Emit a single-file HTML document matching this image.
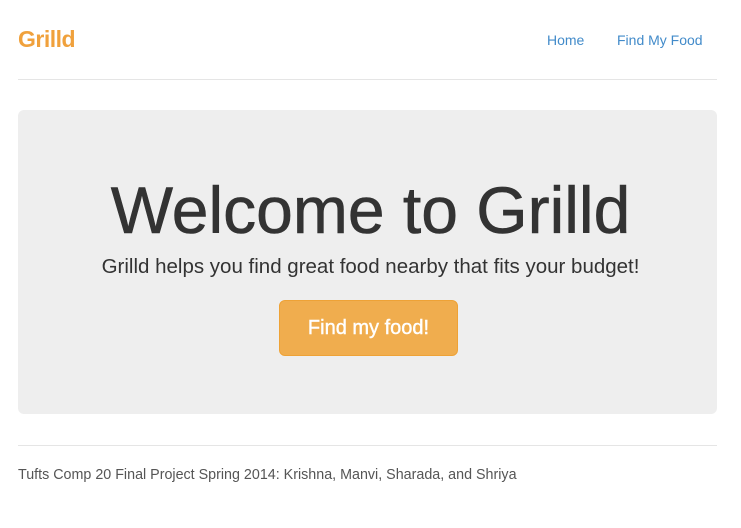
<!DOCTYPE html>
<html><head><style>
body{margin:0;background:#fff;font-family:"Liberation Sans",Arial,sans-serif;color:#333;width:741px;height:528px;overflow:hidden;position:relative}
.logo{position:absolute;left:18px;top:26px;font-size:23px;font-weight:bold;color:#f0a13c;letter-spacing:-0.5px}
.nav{position:absolute;top:32px;font-size:14px;color:#428bca}
.hr{position:absolute;left:18px;width:699px;height:1px;background:#e5e5e5}
.jumbo{position:absolute;left:18px;top:110px;width:699px;height:304px;background:#eee;border-radius:6px}
h1{margin:0;position:absolute;left:0;right:0;text-align:center;top:172px;font-size:66px;font-weight:normal;line-height:76px;color:#333;-webkit-text-stroke:0.6px #333}
.sub{position:absolute;left:0;right:0;text-align:center;top:254px;font-size:20.5px;line-height:26px}
.btn{position:absolute;left:279px;top:300px;width:177px;height:54px;background:#f0ad4e;border:1px solid #eea236;border-radius:6px;color:#fff;font-size:20px;line-height:54px;text-align:center;-webkit-text-stroke:0.4px #fff}
.foot{position:absolute;left:18px;top:467px;font-size:14.3px;color:#555}
</style></head><body>
<div class="logo">Grilld</div>
<div class="nav" style="left:547px">Home</div>
<div class="nav" style="left:617px">Find My Food</div>
<div class="hr" style="top:79px"></div>
<div class="jumbo"></div>
<h1>Welcome to Grilld</h1>
<div class="sub">Grilld helps you find great food nearby that fits your budget!</div>
<div class="btn">Find my food!</div>
<div class="hr" style="top:445px"></div>
<div class="foot">Tufts Comp 20 Final Project Spring 2014: Krishna, Manvi, Sharada, and Shriya</div>
</body></html>
